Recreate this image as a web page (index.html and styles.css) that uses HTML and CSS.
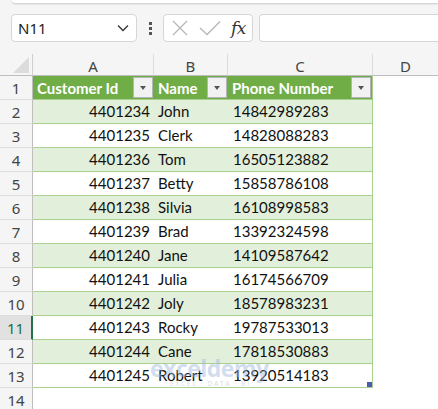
FILE: index.html
```html
<!DOCTYPE html>
<html>
<head>
<meta charset="utf-8">
<link rel="stylesheet" href="styles.css">
</head>
<body>
<div class="topbar"></div>
<div class="fbar">
  <div class="namebox"><span>N11</span>
    <svg class="chev" width="12" height="8" viewBox="0 0 12 8"><path d="M1 1.5 L6 6.5 L11 1.5" fill="none" stroke="#333" stroke-width="1.3"/></svg>
  </div>
  <div class="dots"><i></i><i></i><i></i></div>
  <div class="fxbox">
    <svg width="18" height="18" viewBox="0 0 18 18"><path d="M2 2 L16 16 M16 2 L2 16" stroke="#b8b8b8" stroke-width="1.4" fill="none"/></svg>
    <svg width="22" height="16" viewBox="0 0 22 16"><path d="M1 8 L8 14.5 L21 1.5" stroke="#b8b8b8" stroke-width="1.4" fill="none"/></svg>
    <span class="fx">fx</span>
  </div>
  <div class="finput"></div>
</div>
<div class="sheet">
  <div class="corner"><svg width="16" height="16" viewBox="0 0 16 16"><path d="M16 0 L16 16 L0 16 Z" fill="#dcdcdc"/></svg></div>
  <div class="ch">A</div><div class="ch">B</div><div class="ch">C</div><div class="ch last">D</div>

  <div class="rh">1</div>
  <div class="th">Customer Id<span class="flt"></span></div>
  <div class="th">Name<span class="flt"></span></div>
  <div class="th tr">Phone Number<span class="flt"></span></div>
  <div class="e"></div>

  <div class="rh">2</div><div class="td num band">4401234</div><div class="td band">John</div><div class="td band tr">14842989283</div><div class="e"></div>
  <div class="rh">3</div><div class="td num">4401235</div><div class="td">Clerk</div><div class="td tr">14828088283</div><div class="e"></div>
  <div class="rh">4</div><div class="td num band">4401236</div><div class="td band">Tom</div><div class="td band tr">16505123882</div><div class="e"></div>
  <div class="rh">5</div><div class="td num">4401237</div><div class="td">Betty</div><div class="td tr">15858786108</div><div class="e"></div>
  <div class="rh">6</div><div class="td num band">4401238</div><div class="td band">Silvia</div><div class="td band tr">16108998583</div><div class="e"></div>
  <div class="rh">7</div><div class="td num">4401239</div><div class="td">Brad</div><div class="td tr">13392324598</div><div class="e"></div>
  <div class="rh">8</div><div class="td num band">4401240</div><div class="td band">Jane</div><div class="td band tr">14109587642</div><div class="e"></div>
  <div class="rh">9</div><div class="td num">4401241</div><div class="td">Julia</div><div class="td tr">16174566709</div><div class="e"></div>
  <div class="rh">10</div><div class="td num band">4401242</div><div class="td band">Joly</div><div class="td band tr">18578983231</div><div class="e"></div>
  <div class="rh sel">11</div><div class="td num">4401243</div><div class="td">Rocky</div><div class="td tr">19787533013</div><div class="e"></div>
  <div class="rh">12</div><div class="td num band">4401244</div><div class="td band">Cane</div><div class="td band tr">17818530883</div><div class="e"></div>
  <div class="rh">13</div><div class="td num lastrow">4401245</div><div class="td lastrow">Robert</div><div class="td tr lastrow">13920514183<span class="handle"></span></div><div class="e"></div>
  <div class="rh">14</div><div class="e"></div><div class="e"></div><div class="e"></div><div class="e"></div>

  <div class="wm"><span class="wm1">exceldemy</span><span class="wm2">EXCEL · DATA · BI</span></div>
</div>
</body>
</html>
```

FILE: styles.css
```css
html, body {
  margin: 0;
  padding: 0;
  background: #f5f5f5;
  width: 438px;
  height: 409px;
  overflow: hidden;
}
.topbar {
  height: 3px;
  background: #fff;
  box-shadow: 0 1px 2px rgba(0,0,0,0.18);
  margin: 0 0 0 12px;
  border-bottom-left-radius: 6px;
}
.fbar {
  display: flex;
  align-items: center;
  height: 28px;
  margin-top: 11px;
  padding-left: 11px;
}
.namebox, .fxbox, .finput {
  height: 26px;
  background: #fff;
  border: 1px solid #d6d6d6;
  border-radius: 4px;
  box-sizing: content-box;
}
.namebox {
  display: flex;
  align-items: center;
  justify-content: space-between;
  padding: 0 7px 0 0;
  width: 117px;
  font-family: "Noto Sans", sans-serif;
  font-size: 15px;
  color: #222;
}
.namebox span { padding-left: 6px; }
.dots {
  width: 26px;
  display: flex;
  flex-direction: column;
  align-items: center;
  gap: 2px;
}
.dots i {
  width: 3px;
  height: 3px;
  background: #555;
  display: block;
}
.fxbox {
  width: 88px;
  display: flex;
  align-items: center;
}
.fxbox svg:first-child { margin-left: 7px; }
.fxbox svg:nth-child(2) { margin-left: 10px; }
.fx {
  font-family: "DejaVu Serif", "Liberation Serif", serif;
  font-style: italic;
  font-size: 17px;
  color: #333;
  margin-left: 10px;
  letter-spacing: -0.5px;
}
.finput {
  flex: 1;
  margin-left: 6px;
  border-right: none;
  border-radius: 4px 0 0 4px;
}
.sheet {
  position: relative;
  margin-top: 12px;
  display: grid;
  grid-template-columns: 33px 121px 74px 145px 65px;
  grid-template-rows: 22px repeat(14, 24px);
  background: #fff;
}
.corner {
  background: #f5f5f5;
  border-right: 1px solid #cfcfcf;
  border-bottom: 1px solid #bdbdbd;
  box-sizing: border-box;
  display: flex;
  align-items: flex-end;
  justify-content: flex-end;
  padding: 0 3px 2px 0;
}
.ch {
  background: #f5f5f5;
  border-right: 1px solid #dcdcdc;
  border-bottom: 1px solid #bdbdbd;
  box-sizing: border-box;
  font-family: "Noto Sans", sans-serif;
  font-size: 15px;
  color: #444;
  text-align: center;
  line-height: 24px;
}
.ch.last { border-right: none; }
.rh {
  background: #f5f5f5;
  border-right: 1px solid #bdbdbd;
  border-bottom: 1px solid #dedede;
  box-sizing: border-box;
  font-family: "Noto Sans", sans-serif;
  font-size: 15px;
  color: #444;
  text-align: center;
  line-height: 24px;
}
.rh.sel {
  background: #e1e1e1;
  color: #1e6e45;
  border-right: 2px solid #217346;
}
.th {
  background: #70ad47;
  color: #fff;
  font-family: Lato, "Liberation Sans", sans-serif;
  font-weight: bold;
  font-size: 15px;
  display: flex;
  align-items: center;
  justify-content: space-between;
  padding: 0 1px 0 4px;
  border-bottom: 1px solid #a9d08e;
  box-sizing: border-box;
}
.th.tr { border-right: 1px solid #a9d08e; }
.flt {
  width: 18px;
  height: 19px;
  background: #f2f2f2;
  border: 1px solid #b5b5b5;
  position: relative;
  box-sizing: content-box;
}
.flt::after {
  content: "";
  position: absolute;
  left: 6px;
  top: 8px;
  border-left: 3.5px solid transparent;
  border-right: 3.5px solid transparent;
  border-top: 4px solid #555;
}
.td {
  font-family: Lato, "Liberation Sans", sans-serif;
  font-size: 15px;
  color: #111;
  line-height: 23px;
  padding: 0 4px;
  border-bottom: 1px solid #a9d08e;
  box-sizing: border-box;
  position: relative;
  white-space: nowrap;
}
.td.tr { border-right: 1px solid #a9d08e; padding-left: 5px; }
.td.num { text-align: right; }
.td.band { background: #e2efda; }
.e { background: #fff; }
.handle {
  position: absolute;
  right: 0;
  bottom: 0;
  width: 5px;
  height: 5px;
  background: #4a5bb0;
}
.wm {
  position: absolute;
  left: 150px;
  top: 302px;
  display: flex;
  flex-direction: column;
  align-items: flex-start;
  pointer-events: none;
  opacity: 0.45;
}
.wm1 {
  font-family: "Open Sans", sans-serif;
  font-weight: bold;
  font-size: 23px;
  color: #9db4e0;
  line-height: 24px;
  letter-spacing: -0.5px;
}
.wm2 {
  font-family: "Open Sans", sans-serif;
  font-size: 7px;
  color: #b0b0b0;
  letter-spacing: 1.5px;
  margin-left: 20px;
  line-height: 8px;
}
```
